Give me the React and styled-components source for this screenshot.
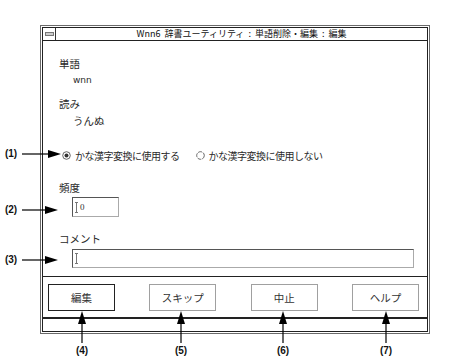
import React from 'react';
import styled, { createGlobalStyle } from 'styled-components';

const GlobalStyle = createGlobalStyle`
  html, body {
    margin: 0;
    padding: 0;
    background: #fff;
  }
  body {
    font-family: "Noto Sans CJK JP", "Liberation Sans", sans-serif;
    color: #222;
  }
`;

const Stage = styled.div`
  position: relative;
  width: 453px;
  height: 357px;
  padding: 25px 0 0 40px;
  box-sizing: border-box;
  background: #fff;
  overflow: hidden;
`;

const Window = styled.div`
  width: 390px;
  height: 309px;
  box-sizing: border-box;
  border: 1px solid #6a6a6a;
  padding: 1px;
  background: #fff;
`;

const Frame = styled.div`
  height: 100%;
  box-sizing: border-box;
  border: 1px solid #222;
  display: flex;
  flex-direction: column;
`;

const TitleBar = styled.div`
  height: 12px;
  display: flex;
  align-items: stretch;
  border-bottom: 1px solid #222;
`;

const MenuBox = styled.div`
  width: 12px;
  border-right: 1px solid #333;
  display: flex;
  align-items: center;
  justify-content: center;

  &::after {
    content: '';
    width: 7px;
    height: 2px;
    border: 1px solid #777;
    background: #ccc;
  }
`;

const Title = styled.div`
  flex: 1;
  text-align: center;
  font-size: 9px;
  line-height: 12px;
  color: #111;
  white-space: nowrap;
  word-spacing: 2px;
`;

const Body = styled.div`
  flex: 1;
  padding: 14px 13px 0 16px;
  display: flex;
  flex-direction: column;
`;

const Label = styled.div`
  font-size: 10.5px;
  line-height: 17px;
  height: 17px;
  margin-top: ${({ $gap }) => $gap || 0}px;
  margin-left: ${({ $indent }) => $indent || 0}px;
  color: #2a2a2a;
`;

const Value = styled(Label)`
  font-size: ${({ $latin }) => ($latin ? '9px' : '10.5px')};
  font-family: ${({ $latin }) => ($latin ? '"DejaVu Sans", sans-serif' : 'inherit')};
`;

const RadioRow = styled.div`
  display: flex;
  align-items: center;
  height: 17px;
  margin-top: 18px;
  margin-left: 3px;
  gap: 16px;
`;

const RadioItem = styled.div`
  display: flex;
  align-items: center;
  gap: 4px;
  font-size: 10px;
  letter-spacing: -0.5px;
  color: #2a2a2a;
`;

const Field = styled.div`
  width: ${({ $width }) => $width};
  height: ${({ $height }) => $height}px;
  box-sizing: border-box;
  margin-top: ${({ $gap }) => $gap}px;
  margin-left: 13px;
  border: 1px solid #555;
  border-right-color: #aaa;
  border-bottom-color: #aaa;
  display: flex;
  align-items: center;
  padding-left: 2px;
  gap: 2px;
  font-family: "Liberation Serif", serif;
  font-size: 9px;
  color: #333;
`;

const Caret = styled.span`
  width: 3px;
  height: 11px;
  border-top: 1px solid #777;
  border-bottom: 1px solid #777;
  box-sizing: border-box;
  position: relative;

  &::after {
    content: '';
    position: absolute;
    left: 1px;
    top: 0;
    bottom: 0;
    width: 1px;
    background: #777;
  }
`;

const ButtonBar = styled.div`
  height: 40px;
  box-sizing: content-box;
  border-top: 1px solid #222;
  border-bottom: 2px solid #222;
  padding: 0 8px 0 5px;
  display: flex;
  align-items: flex-start;
  justify-content: space-between;
`;

const Button = styled.div`
  width: 67px;
  height: 27px;
  margin-top: 7px;
  box-sizing: border-box;
  border: 1px solid ${({ $default }) => ($default ? '#222' : '#a0a0a0')};
  display: flex;
  align-items: center;
  justify-content: center;
  font-size: 10.5px;
  color: #333;
`;

const Footer = styled.div`
  height: 12px;
`;

const Callouts = styled.svg`
  position: absolute;
  left: 0;
  top: 0;
  pointer-events: none;
`;

const Tag = styled.div`
  position: absolute;
  font-family: "Liberation Sans", Arial, sans-serif;
  font-size: 10px;
  font-weight: 600;
  line-height: 12px;
  color: #111;
  transform: translate(-50%, -50%);
`;

const RadioIcon = ({ on }) => (
  <svg width="9" height="9" viewBox="0 0 9 9">
    <circle cx="4.5" cy="4.5" r="3.8" fill="none" stroke="#555" strokeWidth="0.9" strokeDasharray={on ? '0' : '4 1'} />
    {on && <circle cx="4.5" cy="4.5" r="2" fill="#333" />}
  </svg>
);

const leftArrows = [
  { y: 154, tip: 61 },
  { y: 210, tip: 58 },
  { y: 260, tip: 58 },
];

const upArrows = [82, 181, 283, 386];

const tags = [
  { x: 11, y: 154, t: '(1)' },
  { x: 11, y: 210, t: '(2)' },
  { x: 11, y: 260, t: '(3)' },
  { x: 82, y: 351, t: '(4)' },
  { x: 181, y: 351, t: '(5)' },
  { x: 283, y: 351, t: '(6)' },
  { x: 386, y: 351, t: '(7)' },
];

const App = () => (
  <>
    <GlobalStyle />
    <Stage>
      <Window>
        <Frame>
          <TitleBar>
            <MenuBox />
            <Title>Wnn6 辞書ユーティリティ : 単語削除・編集 : 編集</Title>
          </TitleBar>
          <Body>
            <Label>単語</Label>
            <Value $indent={14} $latin>wnn</Value>
            <Label $gap={6}>読み</Label>
            <Value $indent={14}>うんぬ</Value>
            <RadioRow>
              <RadioItem>
                <RadioIcon on />
                かな漢字変換に使用する
              </RadioItem>
              <RadioItem>
                <RadioIcon />
                かな漢字変換に使用しない
              </RadioItem>
            </RadioRow>
            <Label $gap={15}>頻度</Label>
            <Field $width="47px" $height={20} $gap={1}>
              <Caret />0
            </Field>
            <Label $gap={13}>コメント</Label>
            <Field $width="342px" $height={19} $gap={2}>
              <Caret />
            </Field>
          </Body>
          <ButtonBar>
            <Button $default>編集</Button>
            <Button>スキップ</Button>
            <Button>中止</Button>
            <Button>ヘルプ</Button>
          </ButtonBar>
          <Footer />
        </Frame>
      </Window>

      <Callouts width="453" height="357">
        {leftArrows.map(({ y, tip }) => (
          <g key={y}>
            <line x1="22" y1={y} x2={tip - 10} y2={y} stroke="#000" strokeWidth="1.2" />
            <polygon points={`${tip},${y} ${tip - 13},${y - 4} ${tip - 13},${y + 4}`} fill="#000" />
          </g>
        ))}
        {upArrows.map((x) => (
          <g key={x}>
            <line x1={x} y1="320" x2={x} y2="343" stroke="#000" strokeWidth="1.2" />
            <polygon points={`${x},311 ${x - 4},324 ${x + 4},324`} fill="#000" />
          </g>
        ))}
      </Callouts>
      {tags.map(({ x, y, t }) => (
        <Tag key={t} style={{ left: x, top: y }}>{t}</Tag>
      ))}
    </Stage>
  </>
);

export default App;
